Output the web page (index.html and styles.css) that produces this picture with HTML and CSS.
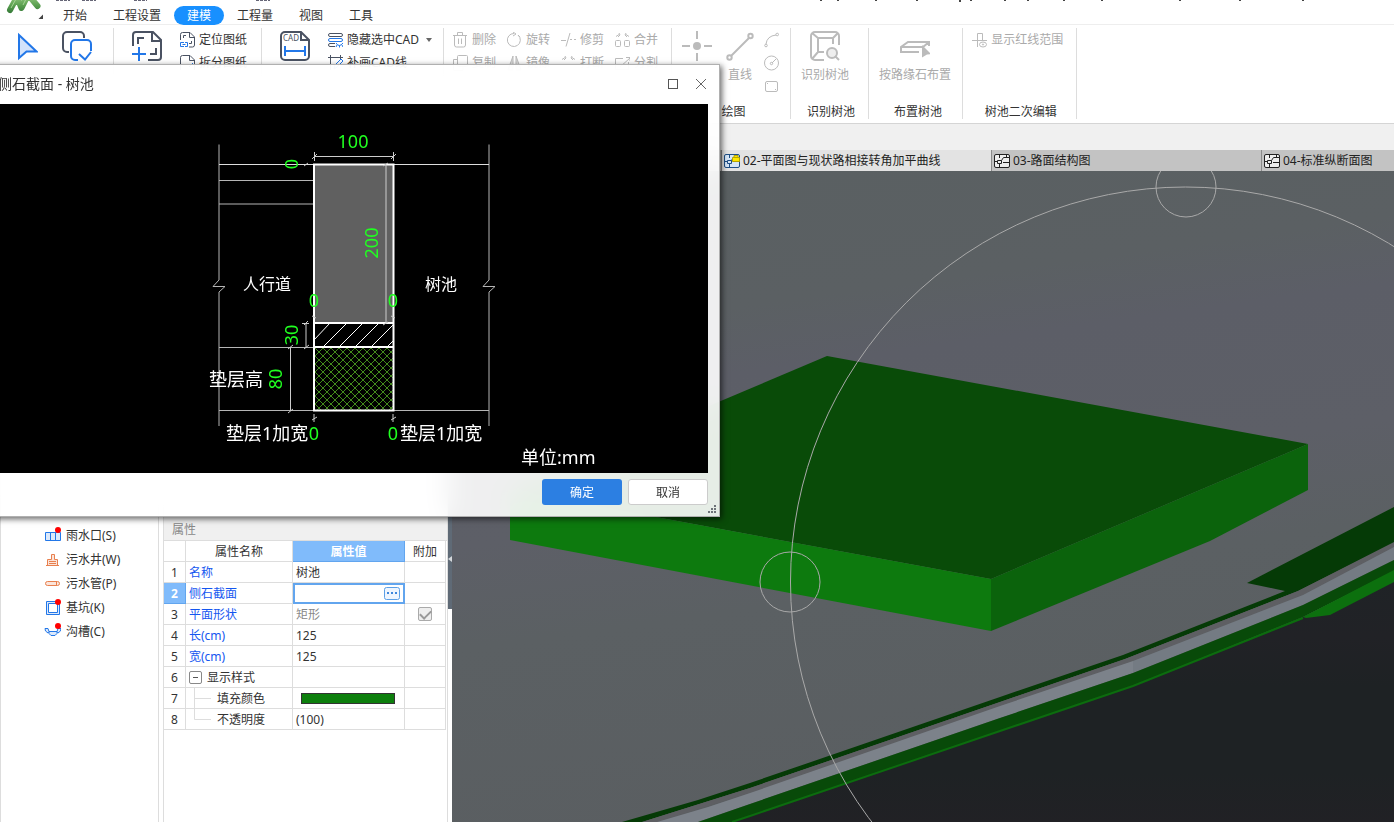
FILE: index.html
```html
<!DOCTYPE html>
<html lang="zh-CN">
<head>
  <meta charset="UTF-8" />
  <meta name="viewport" content="width=device-width, initial-scale=1.0" />
  <title>侧石截面 - 树池</title>
  <link rel="stylesheet" href="styles.css">
</head>
<body>
  <header class="menubar">
    <svg class="logo" width="50" height="24" viewBox="0 0 50 24">
      <defs>
        <linearGradient id="leaf" gradientUnits="userSpaceOnUse" x1="0" y1="-2" x2="0" y2="13">
          <stop offset="0" stop-color="#86bf74" />
          <stop offset=".5" stop-color="#5a9f50" />
          <stop offset="1" stop-color="#357a38" />
        </linearGradient>
      </defs>
      <g fill="none" stroke="url(#leaf)" stroke-width="6" stroke-linecap="round" stroke-linejoin="round">
        <path d="M10 10L17 -3M17 -3L21.500 8L27 -3M30 -3L37.500 6" />
      </g>
      <path d="M11 8L16 -1M23 5L26 -1" stroke="#a5d394" fill="none" />
      <path d="M43 14.500V19H38.500z" fill="#444" />
    </svg>
    <nav class="menu">
      <button>开始</button>
      <button>工程设置</button>
      <button class="active">建模</button>
      <button>工程量</button>
      <button>视图</button>
      <button>工具</button>
    </nav>
    <svg class="title-edge" width="1394" height="3" viewBox="0 0 1394 3">
      <path d="M56 0.500h14M82 0.500h14M134 0.500h13M256 0.500h14" stroke="#667" stroke-dasharray="3 1" />
      <path d="M821 0v1M838 0v1M876 0v1M917 0v1M960 0v2M971 0v1M1005 0v1M1028 0v1M1064 0v1M1102 0v1M1180 0v1M1240 0v1M1303 0v1" stroke="#444" stroke-width="2" />
    </svg>
  </header>

  <section class="ribbon">
    <div class="group group-select">
      <div class="tools">
        <button class="big" aria-label="选择">
          <svg width="22" height="30" viewBox="0 0 22 30"><path d="M3 4L20.500 20.500H10.500L3 27z" fill="#d3e3fb" stroke="#2277e8" stroke-width="2" /></svg>
        </button>
        <button class="big" aria-label="批量选择">
          <svg width="30" height="30" viewBox="0 0 30 30" fill="none" stroke-width="2">
            <path d="M7 21H5a4 4 0 0 1-4-4V5a4 4 0 0 1 4-4h13a4 4 0 0 1 4 4v2" stroke="#4a5262" />
            <path d="M29 20v-7a4 4 0 0 0-4-4H13a4 4 0 0 0-4 4v12a4 4 0 0 0 4 4h3M17 23l6 5.500 6-7.500" stroke="#2277e8" />
          </svg>
        </button>
      </div>
    </div>

    <div class="group group-paper">
      <div class="tools">
        <button class="big" aria-label="添加图纸">
          <svg width="30" height="30" viewBox="0 0 30 30" fill="none" stroke="#4a5262" stroke-width="2">
            <path d="M1 15V4a3 3 0 0 1 3-3h17l8 8v17a3 3 0 0 1-3 3H16M20 1v9h9M6 13V7h6M24 17v6h-6" />
            <path d="M7 16v14M0 23h14" stroke="#2277e8" />
          </svg>
        </button>
        <div class="rows">
          <button class="small">
            <svg width="15" height="16" viewBox="0 0 15 16" fill="none" stroke="#4a5262"><path d="M.5 8V2.500a2 2 0 0 1 2-2H10l4.500 4.500v8a2 2 0 0 1-2 2H9M9.500 1v4.500H14M3.500 6V3.500H6M11.500 9v2.500H9" /><path d="M4 10.500H.5v4H4M5 10.500h2.500v4H5M2.500 12.500h3" stroke="#2277e8" /></svg>
            定位图纸
          </button>
          <button class="small">
            <svg width="15" height="16" viewBox="0 0 15 16" fill="none" stroke="#4a5262"><path d="M.5 15V2.500a2 2 0 0 1 2-2H10l4.500 4.500V15M9.500 1v4.500H14" /><path d="M9 12l4-4" stroke="#2277e8" /></svg>
            拆分图纸
          </button>
        </div>
      </div>
    </div>

    <div class="group group-cad">
      <div class="tools">
        <button class="big" aria-label="CAD识别">
          <svg width="30" height="30" viewBox="0 0 30 30" fill="none" stroke="#4a5262" stroke-width="2">
            <path d="M20 1H5a4 4 0 0 0-4 4v20a4 4 0 0 0 4 4h20a4 4 0 0 0 4-4V9l-8-8v8h8" />
            <path d="M5 15v10M25 15v10M5 20h20" stroke="#2277e8" />
            <text class="cad-label" x="3" y="10">CAD</text>
          </svg>
        </button>
        <div class="rows">
          <button class="small">
            <svg width="15" height="16" viewBox="0 0 15 16" fill="none" stroke="#4a5262"><rect x=".5" y="1.500" width="14" height="3" rx="1.500" /><rect x=".5" y="6.500" width="14" height="3" rx="1.500" stroke="#2277e8" /><path d="M7 11.500H2a1.500 1.500 0 0 0 0 3h5" /><path d="M8 11q3 5 7 0M9 13l-1 2M11.500 13.500v2M14 13l1 2" stroke="#2277e8" /></svg>
            隐藏选中CAD
            <svg class="caret" width="6" height="4" viewBox="0 0 6 4"><path d="M0 0h6L3 4z" fill="#666" /></svg>
          </button>
          <button class="small">
            <svg width="15" height="16" viewBox="0 0 15 16" fill="none" stroke="#4a5262"><path d="M0 2.500h15M2.500 0v15M12.500 0v4" /><path d="M6 14l1-4 6-6 2 2-6 6z" stroke="#2277e8" /></svg>
            补画CAD线
          </button>
        </div>
      </div>
    </div>

    <div class="group group-edit">
      <div class="tools edit-grid">
        <button class="small" disabled>
          <svg width="15" height="16" viewBox="0 0 15 16" fill="none" stroke="#bbb"><path d="M0 3.500h14M4.500 3V.5h5V3M1.500 4v9a2 2 0 0 0 2 2h7a2 2 0 0 0 2-2V4M5.500 6.500V12M8.500 6.500V12" /></svg>
          删除
        </button>
        <button class="small" disabled>
          <svg width="15" height="16" viewBox="0 0 15 16" fill="none" stroke="#bbb"><path d="M7 1.500a6.500 6.500 0 1 0 4 1.500M6 0l3 2-3 2M11 3l2 2" /></svg>
          旋转
        </button>
        <button class="small" disabled>
          <svg width="15" height="16" viewBox="0 0 15 16" fill="none" stroke="#bbb"><path d="M0 8.500h5M5 14.500L9 1M9 7.500h2M13 7.500h2" /></svg>
          修剪
        </button>
        <button class="small" disabled>
          <svg width="15" height="16" viewBox="0 0 15 16" fill="none" stroke="#bbb"><rect x=".5" y="8.500" width="5" height="6" rx="1" /><rect x="9.500" y="8.500" width="5" height="6" rx="1" /><path d="M1 4.500l3-2M4 1l1 2-2 2M14 4.500l-3-2M11 1l-1 2 2 2" /></svg>
          合并
        </button>
        <button class="small" disabled>
          <svg width="15" height="16" viewBox="0 0 15 16" fill="none" stroke="#bbb"><rect x="4.500" y=".5" width="10" height="11" rx="1" /><path d="M4 4.500H.5v11H10V12" /></svg>
          复制
        </button>
        <button class="small" disabled>
          <svg width="15" height="16" viewBox="0 0 15 16" fill="#ddd" stroke="#bbb"><path d="M6 1L1 15h5zM9 1l5 14H9z" /></svg>
          镜像
        </button>
        <button class="small" disabled>
          <svg width="15" height="16" viewBox="0 0 15 16" fill="none" stroke="#bbb"><path d="M0 9.500h5M10 9.500h5M1 4.500l3-2M4 1l1 2-2 2M14 4.500l-3-2M11 1l-1 2 2 2" /></svg>
          打断
        </button>
        <button class="small" disabled>
          <svg width="15" height="16" viewBox="0 0 15 16" fill="none" stroke="#bbb"><path d="M8 3.500H.5v11h13V7M5 12l10-9M11 2.500h4V6" /></svg>
          分割
        </button>
      </div>
    </div>

    <div class="group group-draw">
      <div class="tools">
        <button class="big" disabled aria-label="点">
          <svg width="30" height="30" viewBox="0 0 30 30" stroke="#bbb" stroke-width="2"><circle cx="15" cy="15" r="4" fill="#bbb" stroke="none" /><path d="M15 0v8M15 22v8M0 15h8M22 15h8" /></svg>
        </button>
        <button class="big" disabled>
          <svg width="28" height="30" viewBox="0 0 28 30" fill="none" stroke="#bbb" stroke-width="2"><path d="M5 25L23 7" /><circle cx="3.500" cy="26.500" r="2.200" /><circle cx="24.500" cy="5" r="2.200" /></svg>
          直线
        </button>
        <div class="rows">
          <button class="small" disabled aria-label="弧线">
            <svg width="15" height="16" viewBox="0 0 15 16" fill="none" stroke="#bbb"><path d="M2 12q1-8 10-9" /><circle cx="2" cy="13.500" r="1.300" /><circle cx="13.200" cy="2.500" r="1.300" /></svg>
          </button>
          <button class="small" disabled aria-label="圆">
            <svg width="15" height="16" viewBox="0 0 15 16" fill="none" stroke="#bbb"><circle cx="7.500" cy="8" r="7" /><circle cx="7.500" cy="8.500" r="1.200" /><path d="M8 8l4-4" /></svg>
          </button>
          <button class="small" disabled aria-label="矩形">
            <svg width="15" height="16" viewBox="0 0 15 16" fill="none" stroke="#bbb"><rect x="1.500" y="3.500" width="12" height="10" rx="1.500" /><path d="M3 6l1-1M12 11l-1 1" /></svg>
          </button>
        </div>
      </div>
      <div class="group-name">绘图</div>
    </div>

    <div class="group group-detect">
      <div class="tools">
        <button class="big" disabled>
          <svg width="30" height="30" viewBox="0 0 30 30" fill="none" stroke="#bbb" stroke-width="2"><path d="M14 29H5a4 4 0 0 1-4-4V5a4 4 0 0 1 4-4h20a4 4 0 0 1 4 4v9M2 2l6 5M8 7h15v6M23 7l5-5M8 7v14h6M8 21l-6 7" /><circle cx="22" cy="22" r="5" fill="#eee" /><path d="M25 25l4 4" /></svg>
          识别树池
        </button>
      </div>
      <div class="group-name">识别树池</div>
    </div>

    <div class="group group-place">
      <div class="tools">
        <button class="big" disabled>
          <svg width="30" height="30" viewBox="0 0 30 30" fill="none" stroke="#bbb" stroke-width="2"><path d="M19 21H1v-5l7-5h21l-6 5H1M29 11v4" /><path d="M22 14l9 9-4 .5-5 3z" fill="#bbb" stroke="none" /></svg>
          按路缘石布置
        </button>
      </div>
      <div class="group-name">布置树池</div>
    </div>

    <div class="group group-redline">
      <div class="tools">
        <div class="rows">
          <button class="small" disabled>
            <svg width="15" height="16" viewBox="0 0 15 16" fill="none" stroke="#bbb"><path d="M5.500 8V1.500h5V8M0 8.500h15M5.500 8.500V15" /><ellipse cx="11" cy="12.500" rx="3.500" ry="2.500" /><circle cx="11" cy="12.500" r=".6" /></svg>
            显示红线范围
          </button>
        </div>
      </div>
      <div class="group-name">树池二次编辑</div>
    </div>
  </section>

  <div class="strip"></div>

  <main class="workspace">
    <nav class="tree">
      <a href="#">
        <svg width="18" height="18" viewBox="0 0 18 18" fill="#dce9fb" stroke="#2277e8"><path d="M2.500 5.500h15v8h-15zM7.500 6v8M12.500 6v8" /><circle cx="15" cy="3" r="3" fill="#f00" stroke="none" /></svg>
        雨水口(S)
      </a>
      <a href="#">
        <svg width="18" height="18" viewBox="0 0 18 18" fill="#fbe4da" stroke="#e8804e"><path d="M3 14.500h13M4.500 14V8.500h4v-5h3v5h3V14M6 10.500h7M6 12.500h7" /></svg>
        污水井(W)
      </a>
      <a href="#">
        <svg width="18" height="18" viewBox="0 0 18 18" fill="#fbe4da" stroke="#e8804e"><rect x="2.500" y="6.500" width="14" height="4" rx="2" /><path d="M13.500 7v3" /></svg>
        污水管(P)
      </a>
      <a href="#">
        <svg width="18" height="18" viewBox="0 0 18 18" fill="#dce9fb" stroke="#2277e8"><path d="M3.500 2.500h13v13h-13z" /><path d="M5.500 4.500h9v9h-9z" fill="#fff" /><circle cx="15" cy="3" r="3" fill="#f00" stroke="none" /></svg>
        基坑(K)
      </a>
      <a href="#">
        <svg width="18" height="18" viewBox="0 0 18 18" fill="#dce9fb" stroke="#2277e8"><path d="M6 8.500h8v2l-2 2H8l-2-2z" /><path d="M2 5.500h3l1 3-1 1.500-2.500-2zM18 5.500h-3l-1 3 1 1.500 2.500-2z" /><circle cx="15" cy="3" r="3" fill="#f00" stroke="none" /></svg>
        沟槽(C)
      </a>
    </nav>

    <section class="properties">
      <h2>属性</h2>
      <table>
        <colgroup>
          <col class="col-no"><col class="col-name"><col class="col-value"><col class="col-extra">
        </colgroup>
        <thead>
          <tr><th></th><th>属性名称</th><th class="current">属性值</th><th>附加</th></tr>
        </thead>
        <tbody>
          <tr><th>1</th><td class="key">名称</td><td>树池</td><td></td></tr>
          <tr>
            <th class="current">2</th>
            <td class="key"><label for="section">侧石截面</label></td>
            <td class="editing">
              <div class="editor">
                <input type="text" id="section">
                <button aria-label="编辑截面">
                  <svg width="16" height="13" viewBox="0 0 16 13"><rect x=".5" y=".5" width="15" height="12" rx="2" fill="#eef5fe" stroke="#5b9fe6" /><path d="M3 5h2v2H3zM7 5h2v2H7zM11 5h2v2h-2z" fill="#3d86dc" /></svg>
                </button>
              </div>
            </td>
            <td></td>
          </tr>
          <tr><th>3</th><td class="key">平面形状</td><td class="muted">矩形</td><td class="check"><input type="checkbox" aria-label="附加 平面形状" checked disabled></td></tr>
          <tr><th>4</th><td class="key">长(cm)</td><td>125</td><td></td></tr>
          <tr><th>5</th><td class="key">宽(cm)</td><td>125</td><td></td></tr>
          <tr>
            <th>6</th>
            <td class="plain"><div class="branch"><button class="toggle" aria-label="折叠"></button><span>显示样式</span></div></td>
            <td></td><td></td>
          </tr>
          <tr>
            <th>7</th>
            <td class="plain"><div class="branch leaf"><svg width="17" height="20" viewBox="0 0 17 20"><path d="M.5 0v20M.5 10.500H17" fill="none" stroke="#ddd" /></svg><span>填充颜色</span></div></td>
            <td class="plain"><button class="swatch" aria-label="填充颜色"></button></td><td></td>
          </tr>
          <tr>
            <th>8</th>
            <td class="plain"><div class="branch leaf"><svg width="17" height="20" viewBox="0 0 17 20"><path d="M.5 0v10.500H17" fill="none" stroke="#ddd" /></svg><span>不透明度</span></div></td>
            <td>(100)</td><td></td>
          </tr>
        </tbody>
      </table>
    </section>

    <div class="splitter">
      <button aria-label="收起面板"><svg width="4" height="6" viewBox="0 0 4 6"><path d="M4 0v6L0 3z" fill="#d5d8dc" /></svg></button>
    </div>

    <section class="view">
      <div class="tabs">
        <button aria-label="图纸"></button>
        <button class="active">
          <svg width="16" height="14" viewBox="0 0 16 14" fill="#d6e6f8" stroke="#1f4f86"><rect x=".5" y=".5" width="15" height="13" rx="1.500" /><path d="M5.500 1v3M0 7.500h3M5.500 10v3M9 7.500h7M3.500 6.500h4v3h-4zM7.500 6.500l1-2" /><path d="M8.500 3.500h7v4h-7zM10 3V1.500h4V3" fill="#ffe800" stroke="#b7a500" /></svg>
          02-平面图与现状路相接转角加平曲线
        </button>
        <button>
          <svg width="16" height="14" viewBox="0 0 16 14" fill="#eee" stroke="#222"><rect x=".5" y=".5" width="15" height="13" rx="1.500" /><path d="M5.500 1v3M0 7.500h3M5.500 10v3M9 8.500h7M3.500 6.500h4v3h-4zM7.500 6.500l2-3h6M12.500 1v2" fill="none" /></svg>
          03-路面结构图
        </button>
        <button>
          <svg width="16" height="14" viewBox="0 0 16 14" fill="#eee" stroke="#222"><rect x=".5" y=".5" width="15" height="13" rx="1.500" /><path d="M5.500 1v3M0 7.500h3M5.500 10v3M9 8.500h7M3.500 6.500h4v3h-4zM7.500 6.500l2-3h6M12.500 1v2" fill="none" /></svg>
          04-标准纵断面图
        </button>
      </div>
      <svg class="scene" viewBox="452 171 942 651" preserveAspectRatio="xMinYMin slice">
        <defs>
          <linearGradient id="ground" x1=".3" y1="0" x2=".5" y2="1">
            <stop offset="0" stop-color="#5a6062" />
            <stop offset=".2" stop-color="#5b6063" />
            <stop offset=".3" stop-color="#5c5e67" />
            <stop offset=".5" stop-color="#5d5f67" />
            <stop offset=".65" stop-color="#5b6063" />
            <stop offset="1" stop-color="#5a5e61" />
          </linearGradient>
          <linearGradient id="soil" x1="0" y1="0" x2="0" y2="1">
            <stop offset="0" stop-color="#1f2326" />
            <stop offset=".25" stop-color="#212226" />
            <stop offset=".45" stop-color="#1e2224" />
            <stop offset=".8" stop-color="#1e2224" />
            <stop offset="1" stop-color="#212125" />
          </linearGradient>
        </defs>
        <rect x="452" y="171" width="942" height="651" fill="url(#ground)" />
        <!-- kerb and slope -->
        <polygon points="732,822 750,816 1000,731 1133,686 1303,617 1394,575 1394,822" fill="url(#soil)" />
        <polygon points="1247,583 1394,507 1394,543 1298,591 1285,591" fill="#053a06" />
        <polygon points="622,822 698,800 750,783 1000,697 1123,655 1285,591 1298,591 1125,659 1000,702 750,788 642,822" fill="#053a06" />
        <polygon points="642,822 750,788 1000,702 1125,659 1298,591 1394,542 1394,547 1303,595 1133,661 1000,706 750,793 657,822" fill="#5e5f63" />
        <polygon points="657,822 708,807 750,793 1000,706 1133,661 1133,673 1000,718 750,804 698,822" fill="#7c828a" />
        <polygon points="1133,661 1303,595 1394,547 1394,560 1303,605 1133,673" fill="#747b83" />
        <polygon points="698,822 750,804 1000,718 1133,673 1303,605 1394,560 1394,571 1303,617 1133,686 1000,731 750,816 732,822" fill="#084a09" />
        <polyline points="732,822 750,816 1000,731 1133,686 1303,618" fill="none" stroke="#0c6c0e" stroke-width="2" />
        <polygon points="1303,617 1394,570 1394,582 1330,615 1306,618" fill="#0c700e" />
        <!-- slab -->
        <polygon points="827,356 1308,444 991,579 510,490" fill="#094b08" />
        <polygon points="510,490 991,579 991,631 510,540" fill="#0d7a0e" />
        <polygon points="991,579 1308,444 1308,490 1210,541 991,631" fill="#0b630c" />
        <g fill="none" stroke="#a9a9a9">
          <circle cx="1185.500" cy="582" r="395" />
          <circle cx="1186" cy="187" r="30" />
          <circle cx="790" cy="582" r="30" />
        </g>
      </svg>
    </section>
  </main>

  <div class="dialog" role="dialog" aria-labelledby="dialog-title">
    <div class="dialog-title">
      <h1 id="dialog-title">侧石截面 - 树池</h1>
      <button aria-label="最大化"><svg width="12" height="12" viewBox="0 0 12 12"><rect x="1.500" y="1.500" width="9" height="9" fill="none" stroke="#555" /></svg></button>
      <button aria-label="关闭"><svg width="12" height="12" viewBox="0 0 12 12"><path d="M1 1l10 10M11 1L1 11" stroke="#666" /></svg></button>
    </div>
    <svg class="drawing" viewBox="-15 104 723 369" preserveAspectRatio="xMaxYMin meet">
      <defs>
        <pattern id="mesh" width="8" height="8" patternUnits="userSpaceOnUse" x="315" y="348">
          <path d="M0 0l8 8M8 0L0 8" stroke="#438a1c" fill="none" />
        </pattern>
      </defs>
      <g stroke="#b5b5b5" fill="none">
        <path d="M219 144.500V280L213 286.500H225L219 292V426M489 144.500V280L483 286.500H495L489 292V426" />
        <path d="M219 180.500H314M219 204H314M219 347.500H314M219 410.500H314M394 410.500H489" />
        <path d="M219 164.500H489" stroke="#ddd" />
      </g>
      <rect x="314" y="164.500" width="79.500" height="158.500" fill="#606060" />
      <rect x="314" y="347" width="79.500" height="63.500" fill="url(#mesh)" />
      <path d="M314 340l16-17M323 347l24-24M339 347l24-24M355 347l24-24M371 347l22-22M387 347l6-6" stroke="#fff" />
      <path d="M314 164.500H393.500V410.500H314zM314 323H393.500M314 347H393.500" fill="none" stroke="#fff" stroke-width="2" />
      <g stroke="#ccc" fill="none">
        <path d="M386 165V323M383 166l5-3M383 325l5-3" />
        <path d="M314 156.500H394M314.500 152v9M393.500 152v9M312 159l5-5M391 159l5-5" />
        <path d="M306 323V347M302 323.500h7M304 349l5-4M304 325l4-4M304 166l4-3" />
        <path d="M290.500 347V411M288 349l5-4M288 413l5-4" />
        <path d="M314 414v8M312 420l5-3M393 414v8M391 420l5-3M312 316l4 2M391 316l4 2" />
      </g>
      <g class="dims">
        <text x="353" y="148">100</text>
        <text x="314" y="307">0</text>
        <text x="393" y="307">0</text>
        <text x="314" y="440">0</text>
        <text x="393" y="440">0</text>
        <text transform="translate(298 164) rotate(-90)">0</text>
        <text transform="translate(378 243) rotate(-90)">200</text>
        <text transform="translate(298 335) rotate(-90)">30</text>
        <text transform="translate(282 379) rotate(-90)">80</text>
      </g>
      <g class="notes">
        <text class="side" x="243" y="290">人行道</text>
        <text class="side" x="425" y="290">树池</text>
        <text x="209" y="386">垫层高</text>
        <text x="226" y="440">垫层1加宽</text>
        <text x="400" y="440">垫层1加宽</text>
        <text x="521" y="464">单位:mm</text>
      </g>
    </svg>
    <div class="dialog-footer">
      <button class="ok">确定</button>
      <button class="cancel">取消</button>
    </div>
    <svg class="grip" width="8" height="8" viewBox="0 0 8 8" fill="#6d7378"><path d="M6 0h2v2H6zM6 3h2v2H6zM6 6h2v2H6zM3 3h2v2H3zM3 6h2v2H3zM0 6h2v2H0z" /></svg>
  </div>
</body>
</html>
```
FILE: styles.css
```css
* {
  box-sizing: border-box;
}
body {
  margin: 0;
  height: 100vh;
  overflow: hidden;
  position: relative;
  display: flex;
  flex-direction: column;
  background: #fff;
  color: #333;
  font-family: "Noto Sans", "Noto Sans CJK SC", sans-serif;
  font-size: 12px;
  line-height: 18px;
}
button {
  font: inherit;
  color: inherit;
  background: none;
  border: none;
  padding: 0;
  white-space: nowrap;
}
svg {
  flex: none;
  display: block;
}

/* menu */
.menubar {
  display: flex;
  height: 25px;
  flex: none;
  border-bottom: 1px solid #eee;
}
.menu {
  display: flex;
  padding-top: 6px;
}
.menu button {
  height: 19px;
  padding: 0 13px;
  border-radius: 10px;
}
.menu .active {
  background: #1890ff;
  color: #fff;
}
.title-edge {
  position: absolute;
  top: 0;
  left: 0;
}

/* ribbon */
.ribbon {
  display: flex;
  flex: none;
  height: 99px;
  padding: 3px 0 4px;
  border-bottom: 1px solid #d5d5d5;
}
.group {
  display: flex;
  flex-direction: column;
  justify-content: space-between;
  padding: 0 13px 0 10px;
  border-right: 1px solid #ddd;
}
.tools {
  display: flex;
  align-items: flex-start;
}
.group-select {
  padding: 0 21px 0 16px;
}
.group-select .tools {
  gap: 24px;
}
.group-paper {
  padding: 0 14px 0 18px;
}
.group-paper .tools, .group-cad .tools {
  gap: 18px;
}
.group-cad {
  padding: 0 11px 0 18px;
}
.group-edit, .group-redline {
  padding-left: 9px;
}
.group-draw, .group-place {
  padding-right: 11px;
}
.group-draw .tools {
  gap: 14px;
}
.group-draw .rows {
  margin-left: -4px;
}
.edit-grid {
  display: grid;
  grid-template-columns: repeat(4, auto);
  column-gap: 11px;
}
.big {
  display: flex;
  flex-direction: column;
  align-items: center;
  gap: 5px;
  padding-top: 3px;
}
.small {
  display: flex;
  align-items: center;
  gap: 4px;
  height: 23px;
}
.caret {
  margin-left: 3px;
}
button:disabled {
  color: #aaa;
}
.group-name {
  text-align: center;
  padding-left: 6px;
  line-height: 14px;
}
.cad-label {
  font-size: 8px;
  fill: #4a5262;
  stroke: none;
}
.strip {
  flex: none;
  height: 26px;
  background: #f0f0f0;
}

/* workspace */
.workspace {
  flex: 1;
  min-height: 0;
  display: flex;
}
.tree {
  width: 159px;
  flex: none;
  padding: 374px 0 0 42px;
  border: solid #ddd;
  border-width: 0 1px;
}
.tree a {
  display: flex;
  align-items: center;
  gap: 5px;
  height: 24px;
  color: #333;
  text-decoration: none;
}
.properties {
  flex: none;
  width: 285px;
  margin-left: 4px;
  padding-top: 367px;
  border: solid #ddd;
  border-width: 0 1px;
}
.properties h2 {
  margin: 0;
  height: 24px;
  padding: 0 8px;
  background: #f0f0f0;
  border-bottom: 1px solid #ddd;
  color: #888;
  font-size: 12px;
  font-weight: normal;
  line-height: 26px;
}
table {
  table-layout: fixed;
  width: 282px;
  border-collapse: separate;
  border-spacing: 0;
}
.col-no { width: 22px; }
.col-name { width: 107px; }
.col-value { width: 112px; }
.col-extra { width: 41px; }
th, td {
  height: 21px;
  padding: 2px 3px 0;
  border: solid #ddd;
  border-width: 0 1px 1px 0;
  text-align: left;
  font-weight: normal;
  line-height: 18px;
}
th {
  padding: 2px 0 0;
  text-align: center;
}
th.current {
  background: #80bbfb;
  border-color: #62a5ee;
  color: #fff;
  font-weight: bold;
}
.key {
  color: #1456f0;
}
.muted {
  color: #888;
}
td.editing {
  padding: 0;
  border: 2px solid #62a5ee;
}
td.plain, td.check {
  padding: 0 3px;
}
.editor {
  display: flex;
  align-items: center;
  height: 17px;
  padding-right: 3px;
}
.editor input {
  flex: 1;
  min-width: 0;
  height: 16px;
  padding: 0;
  border: none;
  outline: none;
}
.check input {
  display: block;
  appearance: none;
  width: 14px;
  height: 14px;
  margin: 0 auto;
  border: 1px solid #aaa;
  border-radius: 2px;
  background: #eee;
}
.check input::before {
  content: "";
  display: block;
  width: 9px;
  height: 5px;
  margin: 2px 1px;
  border: solid #999;
  border-width: 0 0 2px 2px;
  transform: rotate(-45deg);
}
.branch {
  display: flex;
  align-items: center;
  gap: 5px;
  height: 20px;
}
.branch span {
  padding-top: 2px;
}
.leaf {
  gap: 6px;
  padding-left: 5px;
}
.toggle {
  width: 13px;
  height: 13px;
  border: 1px solid #888;
  border-radius: 2px;
  background: linear-gradient(#555, #555) center / 5px 1px no-repeat;
}
.swatch {
  display: block;
  width: 94px;
  height: 11px;
  margin-left: 5px;
  background: #0d7f0d;
  border: 1px solid #333;
}
.splitter {
  width: 4px;
  flex: none;
}
.splitter button {
  display: flex;
  align-items: center;
  width: 4px;
  height: 459px;
  padding-top: 359px;
  background: #5f6a76;
}
.view {
  flex: 1;
  min-width: 0;
  display: flex;
  flex-direction: column;
}
.tabs {
  display: flex;
  flex: none;
  height: 21px;
  overflow: hidden;
  background: #c3c3c3;
}
.tabs button {
  display: flex;
  align-items: center;
  flex: none;
  gap: 3px;
  width: 270px;
  padding: 0 2px;
  border-left: 1px solid #8a8a8a;
  color: #222;
}
.tabs button:first-child {
  width: 269px;
}
.tabs .active {
  background: #e3e3e3;
}
.scene {
  flex: 1;
  min-height: 0;
  width: 100%;
}

/* section dialog */
.dialog {
  position: absolute;
  top: 64px;
  left: -16px;
  width: 736px;
  background: rgba(255, 255, 255, 0.9);
  backdrop-filter: blur(14px);
  border: 1px solid #b0b0b0;
  box-shadow: 2px 2px 6px rgba(0, 0, 0, 0.6);
}
.dialog-title {
  display: flex;
  align-items: center;
  gap: 16px;
  height: 39px;
  padding: 0 12px 2px 13px;
}
.dialog-title h1 {
  flex: 1;
  margin: 0;
  font-size: 14px;
  font-weight: normal;
}
.drawing {
  width: 723px;
  background: #000;
}
.dims {
  fill: #20ff20;
  font-size: 18px;
  text-anchor: middle;
}
.notes {
  fill: #fff;
  font-size: 18px;
}
.side {
  font-size: 16px;
}
.dialog-footer {
  display: flex;
  justify-content: flex-end;
  gap: 6px;
  height: 43px;
  padding: 6px 11px;
}
.dialog-footer button {
  width: 80px;
  height: 26px;
  padding-top: 2px;
  border-radius: 3px;
}
.ok {
  background: #2c7fe2;
  color: #fff;
}
.cancel {
  background: #fff;
  border: 1px solid #ccc;
}
.grip {
  position: absolute;
  right: 3px;
  bottom: 3px;
}
```
